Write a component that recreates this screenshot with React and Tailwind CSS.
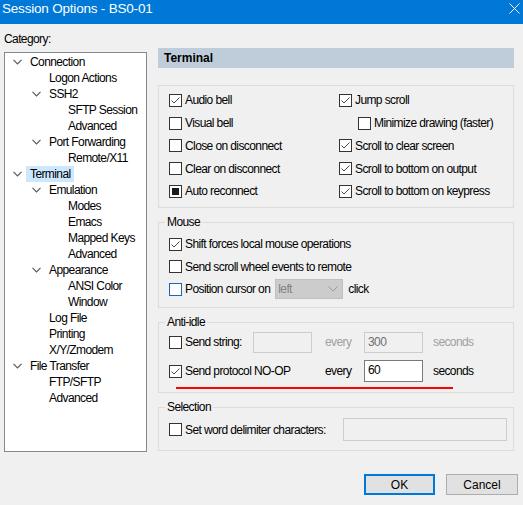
import React from "react";

const tree = [
  [0, true, "Connection"],
  [1, false, "Logon Actions"],
  [1, true, "SSH2"],
  [2, false, "SFTP Session"],
  [2, false, "Advanced"],
  [1, true, "Port Forwarding"],
  [2, false, "Remote/X11"],
  [0, true, "Terminal", true],
  [1, true, "Emulation"],
  [2, false, "Modes"],
  [2, false, "Emacs"],
  [2, false, "Mapped Keys"],
  [2, false, "Advanced"],
  [1, true, "Appearance"],
  [2, false, "ANSI Color"],
  [2, false, "Window"],
  [1, false, "Log File"],
  [1, false, "Printing"],
  [1, false, "X/Y/Zmodem"],
  [0, true, "File Transfer"],
  [1, false, "FTP/SFTP"],
  [1, false, "Advanced"],
];

const padByLevel = ["pl-[8px]", "pl-[27px]", "pl-[46px]"];

function Chevron() {
  return (
    <svg width="9" height="6" viewBox="0 0 9 6" className="block">
      <path d="M0.5 0.8 L4.5 4.8 L8.5 0.8" fill="none" stroke="#5a5a5a" strokeWidth="1.2" />
    </svg>
  );
}

function CB({ checked, ind, blue }) {
  return (
    <span
      className={
        "w-[13px] h-[13px] shrink-0 bg-white border flex items-center justify-center " +
        (blue ? "border-[#1c64b4]" : "border-[#333333]")
      }
    >
      {checked && (
        <svg width="11" height="11" viewBox="0 0 11 11" className="block">
          <path d="M1.5 5.5 L4 8 L9.5 2.5" fill="none" stroke="#4a4a4a" strokeWidth="1" />
        </svg>
      )}
      {ind && <span className="w-[7px] h-[7px] bg-[#1a1a1a]" />}
    </span>
  );
}

function Check({ checked, ind, blue, label }) {
  return (
    <div className="flex items-center">
      <CB checked={checked} ind={ind} blue={blue} />
      <span className="ml-[3px] whitespace-nowrap leading-[16px]">{label}</span>
    </div>
  );
}

function Group({ title, className, children }) {
  return (
    <div className={"relative border border-[#dcdcdc] " + className}>
      {title && (
        <span className="absolute -top-[9px] left-[6px] px-[2px] bg-[#f0f0f0] leading-[16px]">{title}</span>
      )}
      {children}
    </div>
  );
}

export default function App() {
  return (
    <div className="w-[523px] h-[505px] bg-[#f0f0f0] overflow-hidden font-['Liberation_Sans',Arial,sans-serif] text-[12px] tracking-[-0.6px] text-black">
      {/* Title bar */}
      <div className="h-[24px] bg-[#0078d7] flex justify-between items-start">
        <span className="pl-[2px] pt-[1px] text-[13.5px] leading-[16px] text-white tracking-[-0.2px]">
          Session Options - BS0-01
        </span>
        <svg width="11" height="11" viewBox="0 0 11 11" className="mt-[3px] mr-[3px]">
          <path d="M0.5 0.5 L10.5 10.5 M10.5 0.5 L0.5 10.5" stroke="white" strokeWidth="1" />
        </svg>
      </div>

      {/* Body */}
      <div className="flex pt-[7px]">
        {/* Left column */}
        <div className="ml-[4px] w-[143px]">
          <div className="h-[16px] leading-[16px]">Category:</div>
          <div className="mt-[5px] h-[400px] border border-[#828790] bg-white pt-[1px]">
            {tree.map(([lvl, chev, text, sel], i) => (
              <div key={i} className={"h-[16px] flex items-center " + padByLevel[lvl]}>
                <span className="w-[13px] flex items-center">{chev && <Chevron />}</span>
                <span className={"pl-[4px] pr-[3px] leading-[16px] whitespace-nowrap " + (sel ? "bg-[#cce8ff]" : "")}>
                  {text}
                </span>
              </div>
            ))}
          </div>
        </div>

        {/* Right column */}
        <div className="ml-[11px] w-[356px]">
          <div className="mt-[17px] h-[20px] bg-[#bfcddb] pl-[6px] font-bold leading-[20px] tracking-normal">
            Terminal
          </div>

          <Group className="mt-[17px] h-[123px] pt-[3px] pl-[10px]">
            {[
              [<Check checked label="Audio bell" />, <Check checked label="Jump scroll" />],
              [<Check label="Visual bell" />, <div className="pl-[19px]"><Check label="Minimize drawing (faster)" /></div>],
              [<Check label="Close on disconnect" />, <Check checked label="Scroll to clear screen" />],
              [<Check label="Clear on disconnect" />, <Check checked label="Scroll to bottom on output" />],
              [<Check ind label="Auto reconnect" />, <Check checked label="Scroll to bottom on keypress" />],
            ].map(([a, b], i) => (
              <div key={i} className="h-[22.75px] flex items-center">
                <div className="w-[170px]">{a}</div>
                <div>{b}</div>
              </div>
            ))}
          </Group>

          <Group title="Mouse" className="mt-[14px] h-[86px] pt-[10px] pl-[10px]">
            <div className="h-[22.5px] flex items-center">
              <Check checked label="Shift forces local mouse operations" />
            </div>
            <div className="h-[22.5px] flex items-center">
              <Check label="Send scroll wheel events to remote" />
            </div>
            <div className="h-[22.5px] flex items-center">
              <Check blue label="Position cursor on" />
              <div className="ml-[5px] w-[68px] h-[20px] bg-[#cccccc] border border-[#bfbfbf] flex items-center justify-between pl-[2px] pr-[4px]">
                <span className="text-[#838383] leading-[16px]">left</span>
                <svg width="10" height="6" viewBox="0 0 10 6">
                  <path d="M0.5 0.5 L5 5 L9.5 0.5" fill="none" stroke="#9a9a9a" strokeWidth="1" />
                </svg>
              </div>
              <span className="ml-[5px] leading-[16px]">click</span>
            </div>
          </Group>

          <Group title="Anti-idle" className="mt-[14px] h-[71px] pt-[8px] pl-[10px]">
            <div className="h-[22px] flex items-center">
              <div className="w-[84px]">
                <Check label="Send string:" />
              </div>
              <div className="w-[59px] h-[21px] border border-[#cccccc] bg-[#f0f0f0]" />
              <span className="ml-[13px] w-[39px] text-[#a0a0a0] leading-[16px]">every</span>
              <div className="w-[59px] h-[21px] border border-[#cccccc] bg-[#f0f0f0] pl-[3px] pt-[1px] text-[#6d6d6d] leading-[16px]">
                300
              </div>
              <span className="ml-[10px] text-[#a0a0a0] leading-[16px]">seconds</span>
            </div>
            <div className="mt-[7px] h-[22px] flex items-center">
              <div className="w-[156px]">
                <Check checked label="Send protocol NO-OP" />
              </div>
              <span className="w-[39px] leading-[16px]">every</span>
              <div className="w-[59px] h-[22px] border border-[#7a7a7a] bg-white pl-[3px] pt-[1px] leading-[16px]">
                60
              </div>
              <span className="ml-[10px] leading-[16px]">seconds</span>
            </div>
            <div className="mt-[5px] ml-[7px] w-[277px] h-[2px] bg-[#ff0000]" />
          </Group>

          <Group title="Selection" className="mt-[14px] h-[44px] pt-[10px] pl-[10px]">
            <div className="h-[23px] flex items-center">
              <div className="w-[174px]">
                <Check label="Set word delimiter characters:" />
              </div>
              <div className="w-[164px] h-[23px] border border-[#cccccc] bg-[#f0f0f0]" />
            </div>
          </Group>
        </div>
      </div>

      {/* Buttons */}
      <div className="mt-[22px] flex justify-end gap-[11px] pr-[5px]">
        <button className="w-[71px] h-[21px] border-2 border-[#0078d7] bg-[#e1e1e1] flex items-center justify-center leading-[16px] tracking-normal">
          OK
        </button>
        <button className="w-[72px] h-[21px] border border-[#adadad] bg-[#e1e1e1] flex items-center justify-center leading-[16px] tracking-normal">
          Cancel
        </button>
      </div>
    </div>
  );
}
